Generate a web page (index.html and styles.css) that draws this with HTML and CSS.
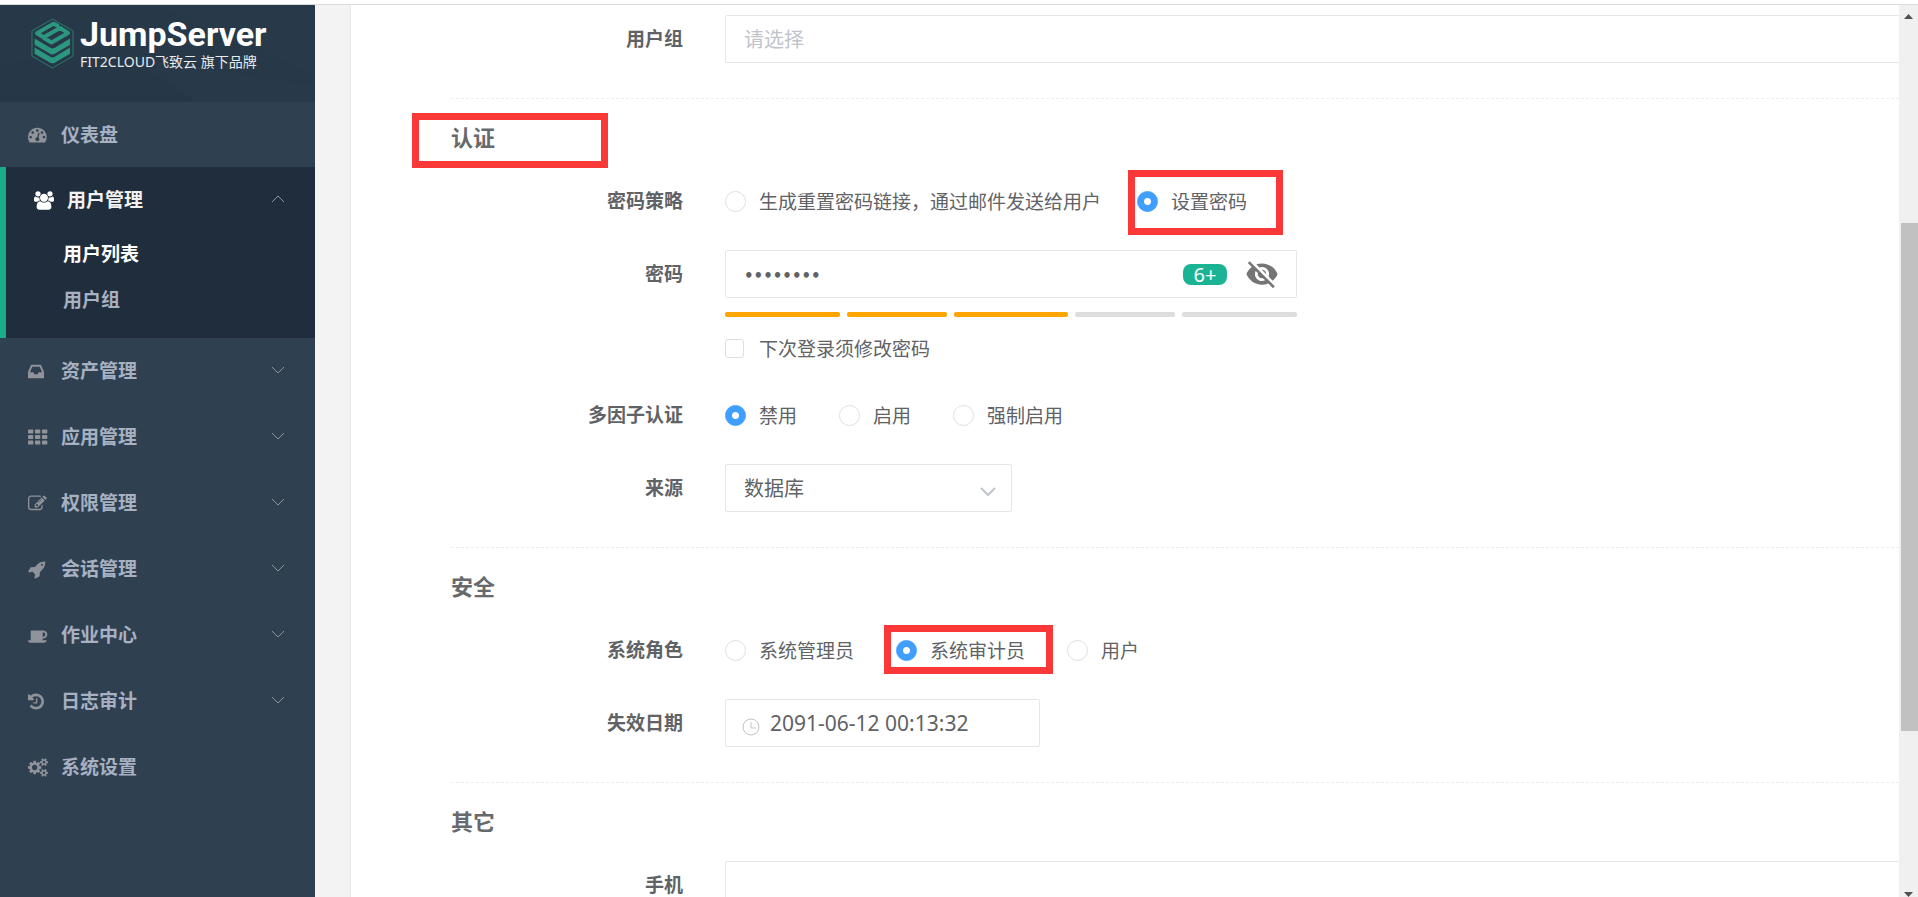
FILE: index.html
```html
<!DOCTYPE html>
<html lang="zh-CN">
<head>
<meta charset="utf-8">
<title>JumpServer</title>
<link rel="stylesheet" href="styles.css">
</head>
<body>
<div class="app">
  <aside class="sidebar">
    <a class="brand" href="#">
      <svg class="brand-bg" viewBox="0 0 315 96" preserveAspectRatio="none" aria-hidden="true">
        <path d="M0 96V60l110-20 85 56z" fill="#263747"/><path d="M158 0 315 70V0z" fill="#283a49"/><path d="M150 55l45 41h120V80z" fill="#283a49"/>
      </svg>
      <svg class="brand-mark" viewBox="0 0 130 154" aria-hidden="true">
        <path d="M65 3 127 39v76l-62 36L3 115V39z" fill="none" stroke="#2b7a6e" stroke-width="3"/>
        <path d="M80 23 68 17 18 46l20 12 50-28 24 15-50 29-22-13" fill="none" stroke="#2b977f" stroke-width="12" stroke-linejoin="round" stroke-linecap="round"/>
        <path d="M11 62l47 28q7 4 14 0l46-28v19l-46 27q-7 4-14 0L11 81z" fill="#2b977f"/>
        <path d="M11 89l47 28q7 4 14 0l46-28v19l-46 27q-7 4-14 0L11 108z" fill="#2b977f"/>
      </svg>
      <span class="brand-text">
        <strong class="brand-name">JumpServer</strong>
        <span class="brand-sub">FIT2CLOUD飞致云 旗下品牌</span>
      </span>
    </a>
    <nav class="menu">
      <a class="menu-item" href="#">
        <svg class="icon" viewBox="0 0 1920 1792" aria-hidden="true"><path d="M384 1152q0-53-37.500-90.500t-90.500-37.500-90.500 37.500-37.500 90.500 37.500 90.500 90.500 37.500 90.500-37.500 37.500-90.500zm192-448q0-53-37.500-90.500t-90.500-37.500-90.500 37.500-37.500 90.500 37.500 90.500 90.500 37.500 90.500-37.500 37.500-90.500zm428 481l101-382q6-26-7.500-48.500t-38.500-29.500-48 6.500-30 39.500l-101 382q-60 5-107 43.500t-63 98.500q-20 77 20 146t117 89 146-20 89-117q16-60-6-117t-72-91zm660-33q0-53-37.500-90.500t-90.500-37.500-90.500 37.500-37.500 90.500 37.500 90.500 90.500 37.500 90.500-37.500 37.500-90.500zm-640-640q0-53-37.500-90.500t-90.500-37.500-90.500 37.500-37.500 90.500 37.500 90.500 90.500 37.500 90.500-37.500 37.500-90.500zm448 192q0-53-37.500-90.500t-90.500-37.500-90.500 37.500-37.500 90.500 37.500 90.500 90.500 37.500 90.500-37.500 37.500-90.500zm320 448q0 261-141 483-19 29-54 29h-1402q-35 0-54-29-141-221-141-483 0-182 71-348t191-286 286-191 348-71 348 71 286 191 191 286 71 348z"/></svg>
        <span class="menu-text">仪表盘</span>
      </a>
      <div class="menu-group">
        <a class="menu-item menu-item-open" href="#">
          <svg class="icon" viewBox="0 0 1920 1792" aria-hidden="true"><path d="M593 896q-162 5-265 128h-134q-82 0-138-40.500t-56-118.500q0-353 124-353 6 0 43.500 21t97.500 42.500 119 21.500q67 0 133-23-5 37-5 66 0 139 81 256zm1071 637q0 120-73 189.500t-194 69.500h-874q-121 0-194-69.500t-73-189.500q0-53 3.500-103.500t14-109 26.500-108.500 43-97.500 62-81 85.500-53.500 111.500-20q10 0 43 21.500t73 48 107 48 135 21.500 135-21.500 107-48 73-48 43-21.500q61 0 111.500 20t85.500 53.500 62 81 43 97.500 26.500 108.500 14 109 3.500 103.500zm-1024-1277q0 106-75 181t-181 75-181-75-75-181 75-181 181-75 181 75 75 181zm704 384q0 159-112.500 271.500t-271.500 112.500-271.500-112.500-112.500-271.500 112.500-271.500 271.500-112.500 271.500 112.500 112.500 271.500zm576 225q0 78-56 118.500t-138 40.500h-134q-103-123-265-128 81-117 81-256 0-29-5-66 66 23 133 23 59 0 119-21.500t97.500-42.500 43.500-21q124 0 124 353zm-128-609q0 106-75 181t-181 75-181-75-75-181 75-181 181-75 181 75 75 181z"/></svg>
          <span class="menu-text">用户管理</span>
          <svg class="chevron" viewBox="0 0 14 8" aria-hidden="true"><path d="M1 7l6-6 6 6"/></svg>
        </a>
        <div class="submenu">
          <a class="submenu-item submenu-item-active" href="#">用户列表</a>
          <a class="submenu-item" href="#">用户组</a>
        </div>
      </div>
      <a class="menu-item" href="#">
        <svg class="icon" viewBox="0 0 1920 1792" aria-hidden="true"><path d="M1023 960h316q-1-3-2.500-8.500t-2.500-7.500l-212-496h-708l-212 496q-1 3-2.500 8.500t-2.500 7.500h316l95 192h320zm513 30v482q0 26-19 45t-45 19h-1408q-26 0-45-19t-19-45v-482q0-62 25-123l238-552q10-25 36.500-42t52.500-17h832q26 0 52.500 17t36.500 42l238 552q25 61 25 123z"/></svg>
        <span class="menu-text">资产管理</span>
        <svg class="chevron" viewBox="0 0 14 8" aria-hidden="true"><path d="M1 1l6 6 6-6"/></svg>
      </a>
      <a class="menu-item" href="#">
        <svg class="icon" viewBox="0 0 1920 1792" aria-hidden="true"><g><rect y="128" width="512" height="384" rx="90"/><rect x="672" y="128" width="512" height="384" rx="90"/><rect x="1344" y="128" width="512" height="384" rx="90"/><rect y="660" width="512" height="384" rx="90"/><rect x="672" y="660" width="512" height="384" rx="90"/><rect x="1344" y="660" width="512" height="384" rx="90"/><rect y="1192" width="512" height="384" rx="90"/><rect x="672" y="1192" width="512" height="384" rx="90"/><rect x="1344" y="1192" width="512" height="384" rx="90"/></g></svg>
        <span class="menu-text">应用管理</span>
        <svg class="chevron" viewBox="0 0 14 8" aria-hidden="true"><path d="M1 1l6 6 6-6"/></svg>
      </a>
      <a class="menu-item" href="#">
        <svg class="icon" viewBox="0 0 1920 1792" aria-hidden="true"><path d="M888 1184l116-116-152-152-116 116v56h96v96h56zm440-720q-16-16-33 1l-350 350q-17 17-1 33t33-1l350-350q17-17 1-33zm80 594v190q0 119-84.500 203.500t-203.500 84.500h-832q-119 0-203.500-84.500t-84.500-203.500v-832q0-119 84.500-203.500t203.500-84.500h832q63 0 117 25 15 7 18 23 3 17-9 29l-49 49q-14 14-32 8-23-6-45-6h-832q-66 0-113 47t-47 113v832q0 66 47 113t113 47h832q66 0 113-47t47-113v-126q0-13 9-22l64-64q15-15 35-7t20 29zm-96-738l288 288-672 672h-288v-288zm444 132l-92 92-288-288 92-92q28-28 68-28t68 28l152 152q28 28 28 68t-28 68z"/></svg>
        <span class="menu-text">权限管理</span>
        <svg class="chevron" viewBox="0 0 14 8" aria-hidden="true"><path d="M1 1l6 6 6-6"/></svg>
      </a>
      <a class="menu-item" href="#">
        <svg class="icon" viewBox="0 0 1920 1792" aria-hidden="true"><path d="M1440 448q0-40-28-68t-68-28-68 28-28 68 28 68 68 28 68-28 28-68zm224-288q0 249-75.500 430.500t-253.500 360.500q-81 80-195 176l-20 379q-2 16-16 26l-384 224q-7 4-16 4-12 0-23-9l-64-64q-13-14-8-32l85-276-281-281-276 85q-3 1-9 1-14 0-23-9l-64-64q-17-19-5-39l224-384q10-14 26-16l379-20q96-114 176-195 188-187 358-258t431-71q14 0 24 9.500t10 22.500z"/></svg>
        <span class="menu-text">会话管理</span>
        <svg class="chevron" viewBox="0 0 14 8" aria-hidden="true"><path d="M1 1l6 6 6-6"/></svg>
      </a>
      <a class="menu-item" href="#">
        <svg class="icon" viewBox="0 0 1920 1792" aria-hidden="true"><path d="M1664 800q0-80-56-136t-136-56h-64v384h64q80 0 136-56t56-136zm-1664 544h1792q0 106-75 181t-181 75h-1280q-106 0-181-75t-75-181zm1856-544q0 159-112.500 271.500t-271.500 112.500h-64v32q0 92-66 158t-158 66h-704q-92 0-158-66t-66-158v-736q0-26 19-45t45-19h1152q159 0 271.500 112.500t112.500 271.500z"/></svg>
        <span class="menu-text">作业中心</span>
        <svg class="chevron" viewBox="0 0 14 8" aria-hidden="true"><path d="M1 1l6 6 6-6"/></svg>
      </a>
      <a class="menu-item" href="#">
        <svg class="icon" viewBox="0 0 1920 1792" aria-hidden="true"><path transform="translate(-128 0)" d="M1664 896q0 156-61 298t-164 245-245 164-298 61q-172 0-327-72.500t-264-204.500q-7-10-6.500-22.500t8.500-20.500l137-138q10-9 25-9 16 2 23 12 73 95 179 147t225 52q104 0 198.500-40.500t163.500-109.500 109.500-163.500 40.500-198.500-40.500-198.500-109.500-163.500-163.500-109.500-198.500-40.500q-98 0-188 35.500t-160 101.500l137 138q31 30 14 69-17 40-59 40h-448q-26 0-45-19t-19-45v-448q0-42 40-59 39-17 69 14l130 129q107-101 244.500-156.500t284.500-55.500q156 0 298 61t245 164 164 245 61 298zm-640-288v448q0 14-9 23t-23 9h-320q-14 0-23-9t-9-23v-64q0-14 9-23t23-9h224v-352q0-14 9-23t23-9h64q14 0 23 9t9 23z"/></svg>
        <span class="menu-text">日志审计</span>
        <svg class="chevron" viewBox="0 0 14 8" aria-hidden="true"><path d="M1 1l6 6 6-6"/></svg>
      </a>
      <a class="menu-item" href="#">
        <svg class="icon" viewBox="0 0 1920 1792" aria-hidden="true"><path d="M896 896q0-106-75-181t-181-75-181 75-75 181 75 181 181 75 181-75 75-181zm768 512q0-52-38-90t-90-38-90 38-38 90q0 53 37.500 90.500t90.500 37.500 90.500-37.500 37.500-90.500zm0-1024q0-52-38-90t-90-38-90 38-38 90q0 53 37.500 90.500t90.500 37.500 90.500-37.500 37.500-90.500zm-384 421v185q0 10-7 19.500t-16 10.500l-155 24q-11 35-32 76 34 48 90 115 7 11 7 20 0 12-7 19-23 30-82.500 89.500t-78.500 59.500q-11 0-21-7l-115-90q-37 19-77 31-11 108-23 155-7 24-30 24h-186q-11 0-20-7.500t-10-17.500l-23-153q-34-10-75-31l-118 89q-7 7-20 7-11 0-21-8-144-133-144-160 0-9 7-19 10-14 41-53t47-61q-23-44-35-82l-152-24q-10-1-17-9.500t-7-19.500v-185q0-10 7-19.500t16-10.500l155-24q11-35 32-76-34-48-90-115-7-11-7-20 0-12 7-20 22-30 82-89t79-59q11 0 21 7l115 90q34-18 77-32 11-108 23-154 7-24 30-24h186q11 0 20 7.500t10 17.500l23 153q34 10 75 31l118-89q8-7 20-7 11 0 21 8 144 133 144 160 0 8-7 19-12 16-42 54t-45 60q23 48 34 82l152 23q10 2 17 10.500t7 19.500zm640 533v140q0 16-149 31-12 27-30 52 51 113 51 138 0 4-4 7-122 71-124 71-8 0-46-47t-52-68q-20 2-30 2t-30-2q-14 21-52 68t-46 47q-2 0-124-71-4-3-4-7 0-25 51-138-18-25-30-52-149-15-149-31v-140q0-16 149-31 13-29 30-52-51-113-51-138 0-4 4-7 4-2 35-20t59-34 30-16q8 0 46 46.500t52 67.500q20-2 30-2t30 2q51-71 92-112l6-2q4 0 124 70 4 3 4 7 0 25-51 138 17 23 30 52 149 15 149 31zm0-1024v140q0 16-149 31-12 27-30 52 51 113 51 138 0 4-4 7-122 71-124 71-8 0-46-47t-52-68q-20 2-30 2t-30-2q-14 21-52 68t-46 47q-2 0-124-71-4-3-4-7 0-25 51-138-18-25-30-52-149-15-149-31v-140q0-16 149-31 13-29 30-52-51-113-51-138 0-4 4-7 4-2 35-20t59-34 30-16q8 0 46 46.500t52 67.500q20-2 30-2t30 2q51-71 92-112l6-2q4 0 124 70 4 3 4 7 0 25-51 138 17 23 30 52 149 15 149 31z"/></svg>
        <span class="menu-text">系统设置</span>
      </a>
    </nav>
  </aside>

  <main class="page">
    <form class="panel">
      <section class="rows">
        <div class="row">
          <label class="label" for="groups">用户组</label>
          <input class="input input-wide" id="groups" type="text" placeholder="请选择">
        </div>
      </section>

      <hr class="divider">
      <h3 class="title"><span class="title-text mark mark-title">认证</span></h3>
      <section class="rows">
        <div class="row" role="radiogroup" aria-labelledby="l-strategy">
          <span class="label" id="l-strategy">密码策略</span>
          <div class="options options-tight">
            <label class="option"><input class="radio" type="radio" name="strategy">生成重置密码链接，通过邮件发送给用户</label>
            <label class="option mark mark-password"><input class="radio" type="radio" name="strategy" checked>设置密码</label>
          </div>
        </div>
        <div class="row">
          <label class="label" for="password">密码</label>
          <div class="password">
            <div class="input password-box">
              <input class="password-input" id="password" type="password" value="12345678">
              <span class="badge">6+</span>
              <button class="eye" type="button" aria-label="显示密码">
                <svg class="eye-icon" viewBox="0 0 24 24" aria-hidden="true"><path d="M12 7c2.760 0 5 2.240 5 5 0 .65-.13 1.260-.36 1.830l2.920 2.920c1.510-1.260 2.700-2.890 3.430-4.750-1.730-4.390-6-7.500-11-7.500-1.400 0-2.740.25-3.980.7l2.160 2.160C10.740 7.130 11.350 7 12 7zM2 4.270l2.280 2.280.46.46C3.080 8.300 1.780 10.020 1 12c1.730 4.390 6 7.500 11 7.500 1.550 0 3.030-.3 4.380-.84l.42.42L19.730 22 21 20.730 3.270 3 2 4.270zM7.530 9.800l1.550 1.550c-.05.21-.08.43-.08.65 0 1.660 1.340 3 3 3 .22 0 .44-.03.65-.08l1.550 1.550c-.67.33-1.410.53-2.200.53-2.760 0-5-2.240-5-5 0-.79.2-1.530.53-2.200zm4.310-.78l3.150 3.150.02-.16c0-1.660-1.340-3-3-3l-.17.01z"/></svg>
              </button>
            </div>
            <div class="strength">
              <span class="bar bar-on"></span><span class="bar bar-on"></span><span class="bar bar-on"></span><span class="bar"></span><span class="bar"></span>
            </div>
            <label class="option option-check"><input class="check" type="checkbox">下次登录须修改密码</label>
          </div>
        </div>
        <div class="row" role="radiogroup" aria-labelledby="l-mfa">
          <span class="label" id="l-mfa">多因子认证</span>
          <div class="options">
            <label class="option"><input class="radio" type="radio" name="mfa" checked>禁用</label>
            <label class="option"><input class="radio" type="radio" name="mfa">启用</label>
            <label class="option"><input class="radio" type="radio" name="mfa">强制启用</label>
          </div>
        </div>
        <div class="row">
          <label class="label" for="source">来源</label>
          <div class="select-box">
            <select class="input select" id="source"><option>数据库</option></select>
            <svg class="select-arrow" viewBox="0 0 16 10" aria-hidden="true"><path d="M1 1l7 7 7-7"/></svg>
          </div>
        </div>
      </section>

      <hr class="divider">
      <h3 class="title">安全</h3>
      <section class="rows">
        <div class="row" role="radiogroup" aria-labelledby="l-role">
          <span class="label" id="l-role">系统角色</span>
          <div class="options">
            <label class="option"><input class="radio" type="radio" name="role">系统管理员</label>
            <label class="option mark mark-role"><input class="radio" type="radio" name="role" checked>系统审计员</label>
            <label class="option"><input class="radio" type="radio" name="role">用户</label>
          </div>
        </div>
        <div class="row">
          <label class="label" for="expired">失效日期</label>
          <div class="input date-box">
            <svg class="clock" viewBox="0 0 18 18" aria-hidden="true"><circle cx="9" cy="9" r="8"/><path d="M9 4v6h5"/></svg>
            <input class="date-input" id="expired" type="text" value="2091-06-12 00:13:32">
          </div>
        </div>
      </section>

      <hr class="divider">
      <h3 class="title">其它</h3>
      <section class="rows">
        <div class="row">
          <label class="label" for="phone">手机</label>
          <input class="input input-wide" id="phone" type="text">
        </div>
      </section>
    </form>
  </main>

  <div class="scrollbar" aria-hidden="true">
    <svg class="scroll-arrow" viewBox="0 0 9 5"><path d="M0 5 4.500 0 9 5z"/></svg>
    <div class="scroll-track"><div class="scroll-thumb"></div></div>
    <svg class="scroll-arrow" viewBox="0 0 9 5"><path d="M0 0 4.500 5 9 0z"/></svg>
  </div>
</div>
</body>
</html>
```
FILE: styles.css
```css
*, *::before, *::after { box-sizing: border-box; }

body {
  margin: 0;
  padding-top: 4px;
  height: 100vh;
  overflow: hidden;
  background: #fff;
  color: #606266;
  font-family: "Noto Sans", "Noto Sans CJK SC", sans-serif;
  font-size: 19px;
}

a { color: inherit; text-decoration: none; }
input, select, button { font: inherit; color: inherit; }

.app {
  display: flex;
  height: 100%;
  border-top: 1px solid #d9d9de;
}

/* Sidebar */
.sidebar {
  flex: none;
  width: 315px;
  background: #2f4050;
  color: #a7b1c2;
  font-family: "Noto Sans CJK SC", sans-serif;
  font-weight: 700;
}

.brand {
  position: relative;
  display: flex;
  align-items: flex-start;
  gap: 6px;
  height: 97px;
  padding: 13px 0 0 31px;
  background: #273949;
  color: #fff;
}
.brand-bg { position: absolute; inset: 0; width: 100%; height: 100%; }
.brand-mark { position: relative; width: 43px; height: 51px; }
.brand-text { position: relative; display: flex; flex-direction: column; }
.brand-name {
  font: 700 34px/32px Roboto, sans-serif;
}
.brand-sub {
  font: 400 14px/24px "Noto Sans", "Noto Sans CJK SC", sans-serif;
  color: #e8ebee;
}

.menu-item {
  display: flex;
  align-items: center;
  height: 66px;
  padding: 0 30px 0 28px;
}
.menu > .menu-item:first-child { height: 65px; }
.menu-text { flex: 1; margin-left: 13px; line-height: 28px; padding-bottom: 2px; }
.icon { width: 20px; height: 19px; fill: #909399; }
.chevron {
  width: 14px;
  height: 8px;
  margin-bottom: 2px;
  fill: none;
  stroke: #909399;
}
.menu-group {
  padding-bottom: 17px;
  border-left: 6px solid #1aab8b;
  background: #202d3c;
}
.menu-item-open { color: #f2f2f2; }
.menu-item-open .icon { fill: #fff; }
.submenu { display: flex; flex-direction: column; gap: 4px; }
.submenu-item { height: 42px; padding-left: 57px; line-height: 40px; }
.submenu-item-active { color: #fff; }

/* Form */
.page {
  flex: 1;
  min-width: 0;
  overflow: hidden;
  padding-left: 35px;
  background: #f3f3f3;
}
.panel {
  min-height: 100%;
  padding: 10px 0 0 100px;
  border-left: 1px solid #e7eaec;
  background: #fff;
}
.rows { display: flex; flex-direction: column; gap: 25px; }
.row { display: flex; align-items: flex-start; gap: 42px; }
.label {
  flex: none;
  width: 232px;
  padding: 10px 0;
  line-height: 28px;
  text-align: right;
  font-weight: 700;
}
.divider {
  margin: 35px 0 0;
  border: 0;
  border-top: 1px dashed #ebedef;
}
.title {
  margin: 0;
  height: 78px;
  line-height: 76px;
  font-size: 22px;
  color: #676a6c;
}
.title-text { display: inline-block; }

.input {
  height: 48px;
  padding: 0 18px;
  border: 1px solid #e5e6e7;
  border-radius: 2px;
  background: #fff;
  outline: 0;
  font-size: 20px;
}
.input-wide { flex: 1; margin-right: -3px; }
.input::placeholder { color: #c0c4cc; }

.options { display: flex; gap: 42px; }
.options-tight { gap: 36px; }
.option {
  display: flex;
  align-items: center;
  gap: 13px;
  height: 48px;
  white-space: nowrap;
}
.option-check { gap: 15px; height: 20px; margin: 21px 0 8px; }
.radio, .check {
  appearance: none;
  flex: none;
  margin: 0;
  border: 1px solid #dcdfe6;
  background: #fff;
}
.radio { width: 21px; height: 21px; border-radius: 50%; }
.radio:checked {
  border-color: #409eff;
  background: radial-gradient(circle, #fff 3px, #409eff 4px);
}
.check { width: 19px; height: 19px; border-radius: 3px; }

.password { width: 572px; }
.password-box { display: flex; align-items: center; padding-right: 17px; }
.password-input {
  flex: 1;
  min-width: 0;
  padding: 4px 0 0;
  border: 0;
  outline: 0;
  font: 15px "DejaVu Sans", sans-serif;
  font-weight: 700;
}
.badge {
  width: 44px;
  height: 21px;
  border-radius: 8px;
  background: #1ab394;
  color: #fff;
  font-size: 20px;
  line-height: 21px;
  text-align: center;
}
.eye { margin-left: 18px; padding: 0; border: 0; background: none; }
.eye-icon { display: block; width: 34px; height: 34px; fill: #757575; }
.strength {
  display: grid;
  grid-template-columns: 8fr 7fr 8fr 7fr 8fr;
  gap: 7px;
  margin-top: 14px;
}
.bar { height: 5px; border-radius: 2px; background: #ddd; }
.bar-on { background: #ffa500; }

.select-box { position: relative; width: 287px; }
.select { appearance: none; width: 100%; }
.select-arrow {
  position: absolute;
  right: 16px;
  top: 23px;
  width: 16px;
  height: 10px;
  fill: none;
  stroke: #c0c4cc;
  stroke-width: 2;
  pointer-events: none;
}

.date-box { display: flex; align-items: center; gap: 10px; width: 315px; padding: 0 16px; }
.clock { flex: none; width: 18px; height: 18px; margin-top: 8px; fill: none; stroke: #c0c4cc; }
.date-input { flex: 1; min-width: 0; padding: 0; border: 0; outline: 0; font-size: 21px; }

/* Red highlight frames */
.mark { position: relative; }
.mark::after {
  content: "";
  position: absolute;
  border: 7px solid #fb3838;
  pointer-events: none;
}
.mark-title::after { left: -39px; top: 14px; width: 196px; height: 55px; }
.mark-password::after { left: -9px; top: -7px; width: 155px; height: 65px; }
.mark-role::after { left: -12px; top: -1px; width: 169px; height: 49px; }

/* Scrollbar */
.scrollbar {
  flex: none;
  display: flex;
  flex-direction: column;
  align-items: center;
  gap: 6px;
  width: 19px;
  padding-top: 9px;
  background: #f0f0f0;
}
.scroll-arrow { flex: none; width: 9px; height: 5px; fill: #505050; }
.scroll-track { flex: 1; align-self: stretch; padding-left: 2px; }
.scroll-track::before { content: ""; display: block; height: 23%; }
.scroll-thumb { height: 59%; background: #c1c1c1; }
```
